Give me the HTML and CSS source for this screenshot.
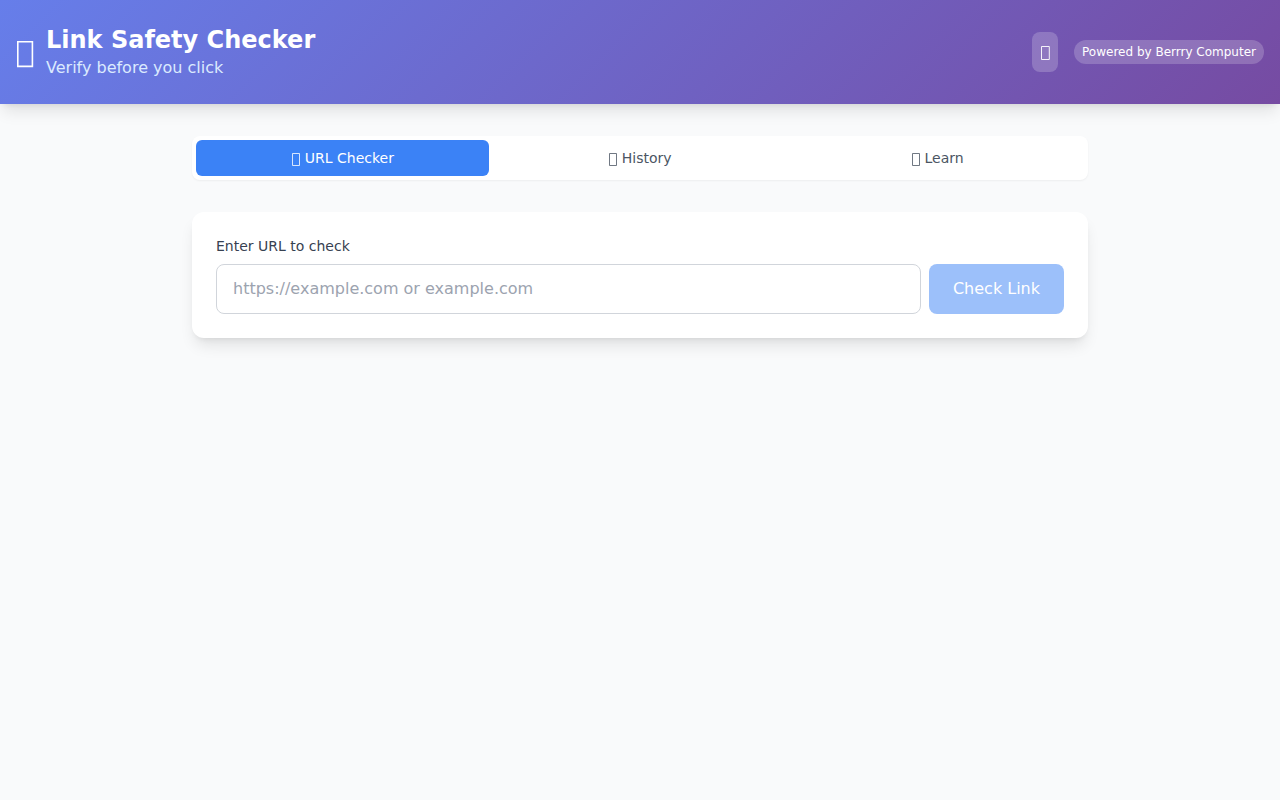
FILE: index.html
```html
<!DOCTYPE html>
<html lang="en">
<head>
<meta charset="UTF-8">
<meta name="viewport" content="width=device-width, initial-scale=1.0">
<title>Link Safety Checker</title>
<link rel="stylesheet" href="styles.css">
</head>
<body>
    <header class="header">
        <div class="brand">
            <svg class="brand-icon" viewBox="0 0 18 36" aria-hidden="true"><path d="M1.8 7.8h14.6v24.6h-14.6z"/></svg>
            <div>
                <h1 class="brand-title">Link Safety Checker</h1>
                <p class="brand-subtitle">Verify before you click</p>
            </div>
        </div>
        <div class="header-actions">
            <button class="theme-toggle" type="button" aria-label="Toggle dark mode">
                <svg class="toggle-icon" viewBox="0 0 10 24" aria-hidden="true"><path d="M1.5 6.5h7.8v13h-7.8z"/></svg>
            </button>
            <span class="badge">Powered by Berrry Computer</span>
        </div>
    </header>

    <main class="main">
        <nav class="tabs">
            <button class="tab active" type="button"><svg class="tab-icon" viewBox="0 0 9 20" aria-hidden="true"><path d="M1.5 5.5h7v12h-7z"/></svg> URL Checker</button>
            <button class="tab" type="button"><svg class="tab-icon" viewBox="0 0 9 20" aria-hidden="true"><path d="M1.5 5.5h7v12h-7z"/></svg> History</button>
            <button class="tab" type="button"><svg class="tab-icon" viewBox="0 0 9 20" aria-hidden="true"><path d="M1.5 5.5h7v12h-7z"/></svg> Learn</button>
        </nav>

        <form class="card" id="checkForm">
            <label class="label" for="urlInput">Enter URL to check</label>
            <div class="input-row">
                <input class="url-input" id="urlInput" type="text" placeholder="https://example.com or example.com">
                <button class="check-button" id="checkButton" type="submit" disabled>Check Link</button>
            </div>
        </form>
    </main>

<script>
    const urlInput = document.getElementById('urlInput');
    const checkButton = document.getElementById('checkButton');
    const tabs = document.querySelectorAll('.tab');

    urlInput.addEventListener('input', () => {
        checkButton.disabled = urlInput.value.trim() === '';
    });

    document.getElementById('checkForm').addEventListener('submit', (e) => {
        e.preventDefault();
    });

    tabs.forEach((tab) => {
        tab.addEventListener('click', () => {
            tabs.forEach((t) => t.classList.remove('active'));
            tab.classList.add('active');
        });
    });
</script>
</body>
</html>
```

FILE: styles.css
```css
* {
    box-sizing: border-box;
}
body {
    margin: 0;
    min-height: 100vh;
    font-family: "DejaVu Sans", sans-serif;
    font-size: 16px;
    line-height: 24px;
    background-color: #f9fafb;
}
button,
input {
    font: inherit;
    margin: 0;
}
button {
    border: none;
    cursor: pointer;
}
svg {
    fill: none;
    stroke: currentColor;
}
.header {
    display: flex;
    align-items: center;
    justify-content: space-between;
    padding: 24px 16px;
    color: #fff;
    background: linear-gradient(135deg, #667eea 0%, #764ba2 100%);
    box-shadow: 0 10px 15px -3px rgba(0, 0, 0, 0.1), 0 4px 6px -4px rgba(0, 0, 0, 0.1);
}
.brand {
    display: flex;
    align-items: center;
    gap: 12px;
}
.brand-icon {
    width: 18px;
    height: 36px;
    stroke-width: 1.6;
}
.brand-title {
    margin: 0;
    font-size: 24px;
    line-height: 32px;
    font-weight: 700;
}
.brand-subtitle {
    margin: 0;
    color: #dbeafe;
}
.header-actions {
    display: flex;
    align-items: center;
    gap: 16px;
}
.theme-toggle {
    padding: 8px;
    color: #fff;
    background-color: rgba(255, 255, 255, 0.2);
    border-radius: 8px;
}
.toggle-icon {
    display: block;
    width: 10px;
    height: 24px;
    stroke-width: 0.9;
}
.badge {
    padding: 4px 8px;
    font-size: 12px;
    line-height: 16px;
    background-color: rgba(255, 255, 255, 0.2);
    border-radius: 999px;
}
.main {
    max-width: 896px;
    margin: 0 auto;
    padding: 32px 0;
}
.tabs {
    display: flex;
    gap: 4px;
    padding: 4px;
    margin-bottom: 32px;
    background-color: #fff;
    border-radius: 8px;
    box-shadow: 0 1px 2px rgba(0, 0, 0, 0.05);
}
.tab {
    flex: 1;
    padding: 8px 16px;
    font-size: 14px;
    line-height: 20px;
    color: #4b5563;
    background: none;
    border-radius: 6px;
}
.tab.active {
    color: #fff;
    background-color: #3b82f6;
}
.tab-icon {
    width: 9px;
    height: 20px;
    vertical-align: top;
    stroke-width: 0.8;
}
.card {
    padding: 24px;
    background-color: #fff;
    border-radius: 12px;
    box-shadow: 0 10px 15px -3px rgba(0, 0, 0, 0.1), 0 4px 6px -4px rgba(0, 0, 0, 0.1);
}
.label {
    display: block;
    margin-bottom: 8px;
    font-size: 14px;
    line-height: 20px;
    color: #374151;
}
.input-row {
    display: flex;
    gap: 8px;
}
.url-input {
    flex: 1;
    min-width: 0;
    padding: 12px 16px;
    color: #111827;
    background-color: #fff;
    border: 1px solid #d1d5db;
    border-radius: 8px;
}
.url-input::placeholder {
    color: #9ca3af;
}
.check-button {
    padding: 12px 24px;
    color: #fff;
    background-color: #3b82f6;
    border-radius: 8px;
}
.check-button:disabled {
    opacity: 0.5;
    cursor: not-allowed;
}
```
